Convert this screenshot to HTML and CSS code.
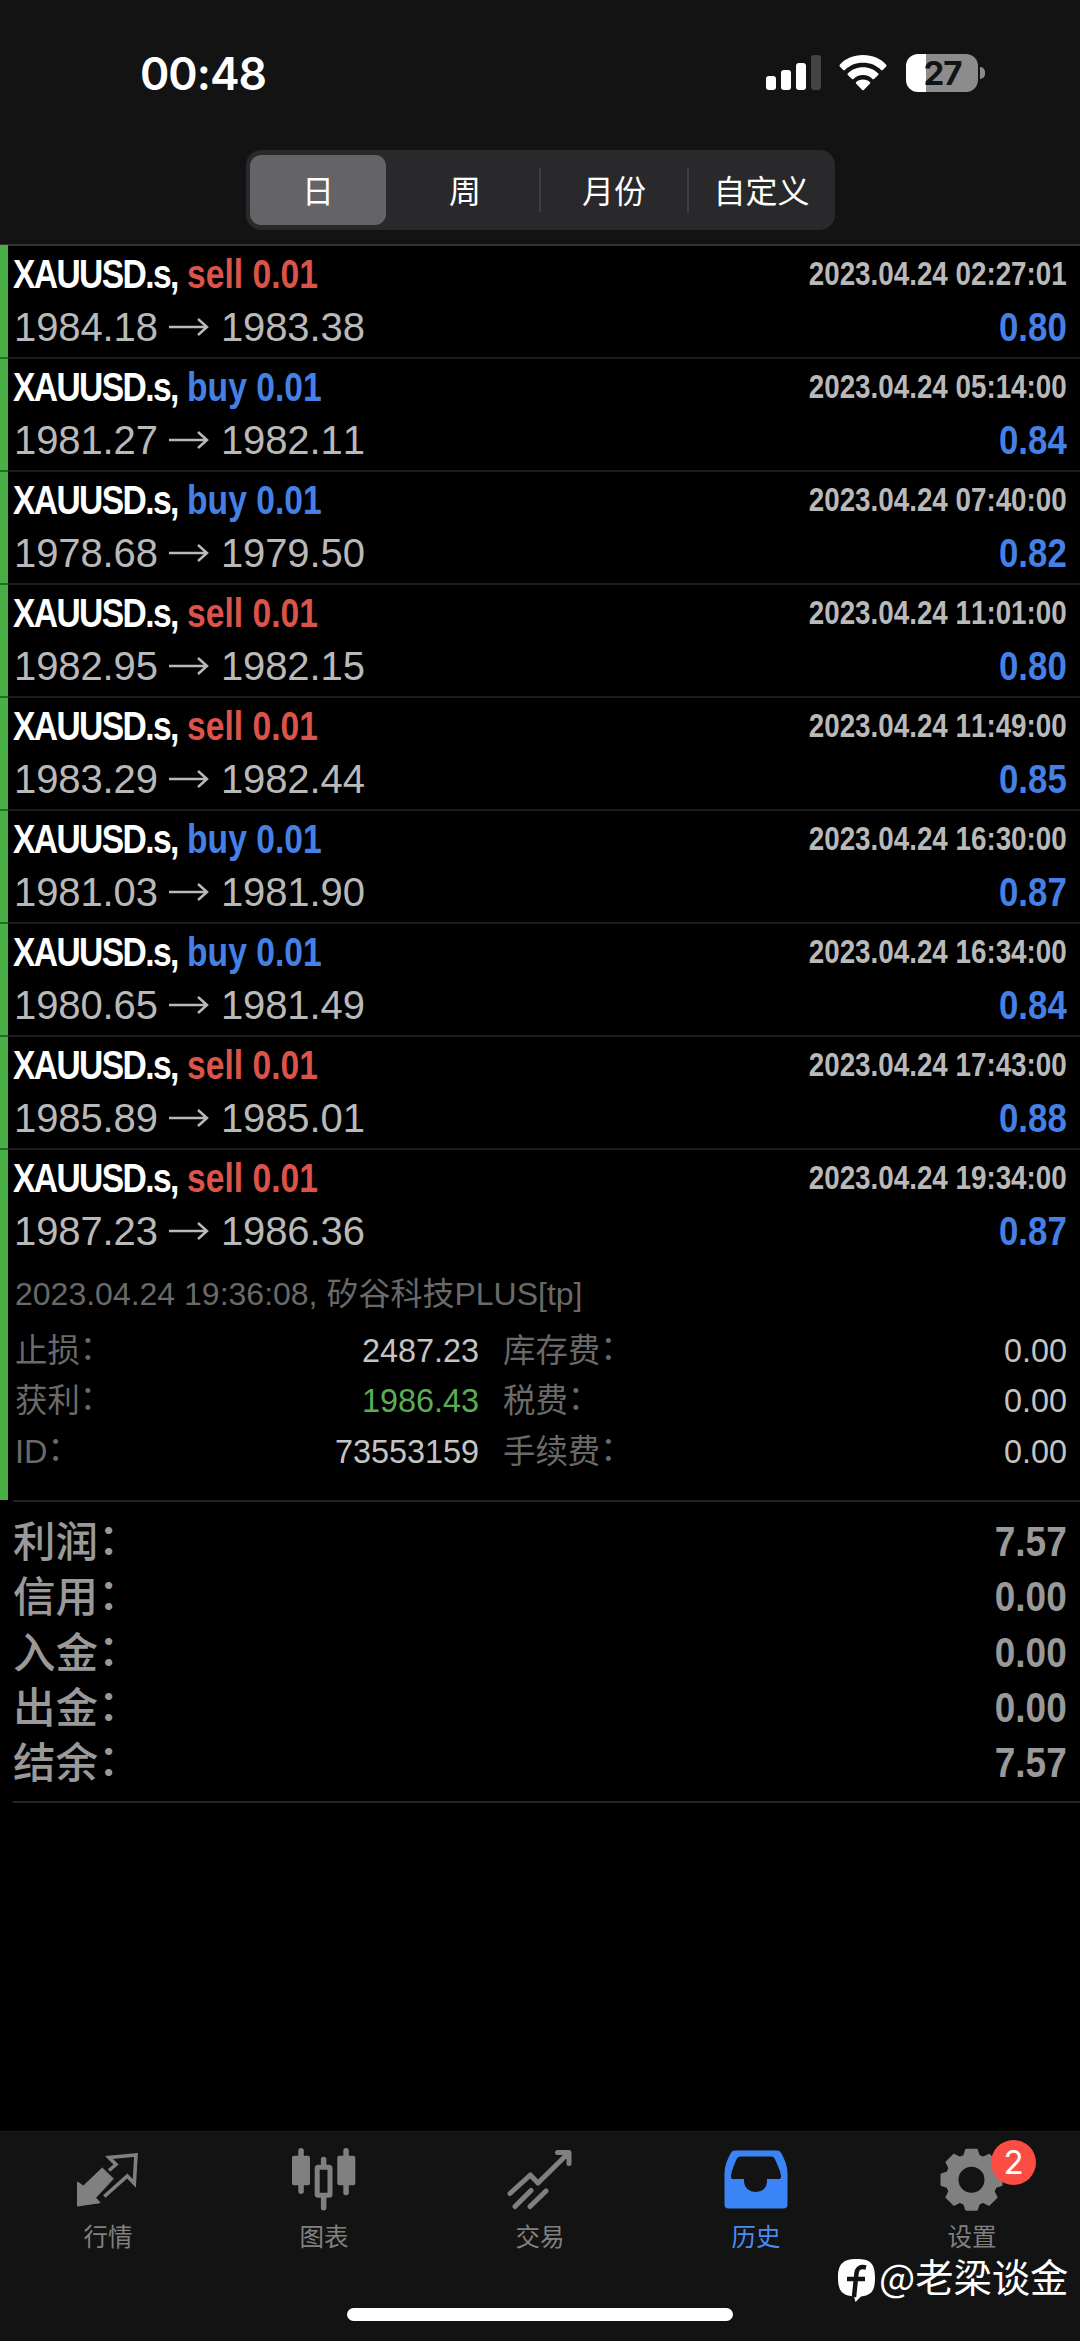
FILE: index.html
```html
<!DOCTYPE html>
<html lang="zh-CN">
<head>
<meta charset="utf-8">
<title>历史</title>
<link rel="stylesheet" href="styles.css">
</head>
<body>
<div class="app">
  <header class="header">
    <div class="status">
      <span class="clock">00:48</span>
      <div class="status-icons">
        <svg class="signal" width="56" height="36" viewBox="0 0 56 36">
          <rect x="0" y="21" width="10" height="14" rx="3" fill="#fff"/>
          <rect x="15" y="15" width="10" height="20" rx="3" fill="#fff"/>
          <rect x="30" y="8" width="10" height="27" rx="3" fill="#fff"/>
          <rect x="45" y="0" width="10" height="35" rx="3" fill="#444"/>
        </svg>
        <svg class="wifi" width="48" height="36" viewBox="0 0 48 36" fill="#fff">
          <path d="M24 0C33.500 0 41.700 3.600 47.200 9.700Q48 10.700 47.200 11.600L43.800 15Q43 15.700 42.100 14.900C37.500 10.300 31.400 7.700 24 7.700S10.500 10.300 5.900 14.900Q5 15.700 4.200 15L.8 11.600Q0 10.700.8 9.700C6.300 3.600 14.500 0 24 0Z"/>
          <path d="M24 12.200C30.300 12.200 35.500 14.600 39.300 18.500Q39.900 19.200 39.200 20L35 24Q34.300 24.600 33.500 23.900C31 21.300 28 20 24 20S17 21.300 14.500 23.900Q13.700 24.600 13 24L8.800 20Q8.100 19.200 8.700 18.500C12.500 14.600 17.700 12.200 24 12.200Z"/>
          <path d="M24 24.600C26.900 24.600 29.300 25.600 31 27.300Q31.500 27.900 31 28.500L24.800 35Q24 35.700 23.200 35L17 28.500Q16.500 27.900 17 27.300C18.700 25.600 21.100 24.600 24 24.600Z"/>
        </svg>
        <div class="battery"><span class="battery-level">27</span><span class="battery-cap"></span></div>
      </div>
    </div>
    <nav class="segments">
      <span class="segment active">日</span>
      <span class="segment week">周</span>
      <span class="segment ruled">月份</span>
      <span class="segment ruled">自定义</span>
    </nav>
  </header>

  <main class="deals" id="deals"></main>

  <section class="summary">
    <div class="sum-row"><span>利润<i class="colon">：</i></span><b>7.57</b></div>
    <div class="sum-row"><span>信用<i class="colon">：</i></span><b>0.00</b></div>
    <div class="sum-row"><span>入金<i class="colon">：</i></span><b>0.00</b></div>
    <div class="sum-row"><span>出金<i class="colon">：</i></span><b>0.00</b></div>
    <div class="sum-row"><span>结余<i class="colon">：</i></span><b>7.57</b></div>
  </section>

  <footer class="tabbar">
    <div class="tabs">
      <div class="tab">
        <svg width="80" height="80" viewBox="0 0 80 80">
          <path d="M34.300 17L45.300 27.700L27.700 46.700L32 51.700L9.500 55V31L15.300 35Z" fill="#808080" stroke="#808080" stroke-width="1" stroke-linejoin="round"/>
          <path d="M36.300 45.500L59.300 25L66.300 32.500L68 4L41 6.500L48 13.500L41 19.500" fill="none" stroke="#808080" stroke-width="3.600"/>
        </svg>
        <span>行情</span>
      </div>
      <div class="tab">
        <svg width="80" height="80" viewBox="0 0 80 80" fill="#808080">
          <rect x="14.300" y="-3" width="5.500" height="46" rx="2.700"/><rect x="8" y="4.700" width="18" height="29.600" rx="2"/>
          <rect x="59.300" y="-3" width="5.500" height="47.300" rx="2.700"/><rect x="53.300" y="4.700" width="18" height="29.600" rx="2"/>
          <rect x="36.900" y="5.700" width="5.500" height="12" rx="2.700"/><rect x="36.900" y="44" width="5.500" height="15.500" rx="2.700"/>
          <rect x="33.200" y="16.300" width="12.800" height="28" rx="1" fill="none" stroke="#808080" stroke-width="5"/>
        </svg>
        <span>图表</span>
      </div>
      <div class="tab">
        <svg width="80" height="80" viewBox="0 0 80 80" fill="none" stroke="#808080" stroke-width="5" stroke-linecap="round" stroke-linejoin="round">
          <path d="M10 42.500L30.300 24L38 32L67.500 3M57.500 1.500H69V12.500M15 55.500L31 39.500M30 55.500L46 40"/>
        </svg>
        <span>交易</span>
      </div>
      <div class="tab current">
        <svg width="80" height="80" viewBox="0 0 80 80">
          <path transform="translate(0 -1.400)" fill-rule="evenodd" fill="#3a84f7" d="M19 1H61Q64 1 65.500 4C69 10.500 71.500 17 71.500 24V55Q71.500 59 67.500 59H12.500Q8.500 59 8.500 55V24C8.500 17 11 10.500 14.500 4Q16 1 19 1ZM24 7Q22 7 21 9C18.500 14 16 20 15 26Q14.800 29.500 17 29.500H28V32.500Q29 42 40 42.500Q50 42 51 32.500V29.500H62.500Q65.500 29.500 65 26C64 20 61 14 58.500 9Q57.500 7 55.500 7Z"/>
        </svg>
        <span>历史</span>
      </div>
      <div class="tab">
        <svg width="80" height="80" viewBox="0 0 80 80">
          <path id="gear" fill-rule="evenodd" fill="#808080" stroke="#808080" stroke-width="2" stroke-linejoin="round"/>
        </svg>
        <span>设置</span>
        <i class="badge">2</i>
      </div>
    </div>
    <div class="home-bar"></div>
    <div class="watermark">
      <svg width="38" height="44" viewBox="0 0 38 44">
        <path fill="#fff" d="M18.500 0C32 0 37 4 37 18.500S33 36 23 37.500L17.500 43L16 37.500C4 36.500 0 32 0 18.500S5 0 18.500 0Z"/>
        <path d="M28 8.500Q19.500 6.500 18.500 14L16 38M9 20H27" fill="none" stroke="#131313" stroke-width="4.500"/>
      </svg>
      <span>@老梁谈金</span>
    </div>
  </footer>
</div>
<script src="app.js"></script>
</body>
</html>
```
FILE: styles.css
```css
* { box-sizing: border-box; }
body {
  margin: 0;
  background: #000;
  color: #b9b9b9;
  font-family: "Liberation Sans", "Noto Sans CJK SC", sans-serif;
}
.app {
  width: 1080px;
  height: 2341px;
  display: flex;
  flex-direction: column;
  overflow: hidden;
}
svg { display: block; flex: none; overflow: visible; }

/* header */
.header {
  height: 246px;
  margin-bottom: -1px;
  background: #131313;
  border-bottom: 2px solid #333;
}
.status {
  height: 150px;
  padding: 2px 102px 6px 140px;
  display: flex;
  align-items: center;
  justify-content: space-between;
}
.clock {
  padding-top: 2px;
  color: #fff;
  font: 600 44.500px/50px Inter, sans-serif;
  letter-spacing: -1px;
}
.status-icons { display: flex; align-items: center; }
.wifi { margin-left: 17px; }
.battery {
  position: relative;
  width: 72px;
  height: 38px;
  margin-left: 19px;
  border-radius: 12px;
  background: linear-gradient(90deg, #fff 20px, #8c8c8c 20px);
}
.battery-level {
  display: block;
  padding-left: 1px;
  text-align: center;
  color: #131313;
  font: 700 33px/38px Inter, sans-serif;
  letter-spacing: -1px;
}
.battery-cap {
  position: absolute;
  left: 74px;
  top: 13px;
  width: 5px;
  height: 12px;
  border-radius: 0 6px 6px 0;
  background: #8c8c8c;
}
.segments {
  width: 589px;
  height: 80px;
  margin-left: 246px;
  padding: 5px 0 5px 4px;
  display: grid;
  grid-template-columns: 136px 154px 148px 147px;
  border-radius: 15px;
  background: #29292b;
}
.segment {
  position: relative;
  display: flex;
  align-items: center;
  justify-content: center;
  padding-bottom: 3px;
  color: #fff;
  font-size: 32px;
}
.week { padding-left: 4px; }
.active { border-radius: 11px; background: #646368; }
.ruled::before {
  content: "";
  position: absolute;
  left: -1px;
  top: 13px;
  width: 2px;
  height: 44px;
  background: #3f3f42;
}

/* closed deals */
.deal {
  height: 113px;
  padding: 9px 13px 0 5px;
  border-left: 8px solid #49ae44;
  position: relative;
}
.deal + .deal::before {
  content: "";
  position: absolute;
  left: -8px;
  right: 0;
  top: -1px;
  height: 2px;
  background: linear-gradient(90deg, #2a6a28 8px, #1c1c1c 8px);
}
.deal.expanded { height: 351px; }
.line {
  display: flex;
  justify-content: space-between;
  white-space: nowrap;
  font-kerning: none;
}
.title, .date { height: 40px; line-height: 40px; font-weight: 700; }
.title { font-size: 41.500px; transform: scaleX(.81); transform-origin: 0 0; }
.symbol { color: #fff; letter-spacing: -2px; }
.sell { color: #db5349; }
.buy { color: #4580e6; }
.date { margin-top: -1px; font-size: 34px; transform: scaleX(.817); transform-origin: 100% 0; }
.prices, .profit { height: 54px; margin-top: 6px; line-height: 54px; }
.prices {
  display: flex;
  align-items: center;
  padding-left: 1px;
  font-size: 40px;
  letter-spacing: -.1px;
}
.prices svg { margin: 0 12px 0 11px; }
.profit {
  color: #4580e6;
  font-size: 41px;
  font-weight: 700;
  transform: scaleX(.85);
  transform-origin: 100% 0;
}
.comment {
  margin: 11px 0 0 2px;
  height: 50px;
  line-height: 50px;
  font-size: 32px;
  color: #6a6a6a;
}
.facts {
  margin: 7px 0 0 2px;
  display: grid;
  grid-template-columns: 140px 324px 24px 200px 1fr;
  grid-auto-rows: 50.300px;
  line-height: 50px;
  font-size: 32.400px;
  color: #6a6a6a;
}
.colon { display: inline-block; font-style: normal; transform: translate(0, -.08em); }
.value { text-align: right; color: #c4c4c4; }
.value.take { color: #5bad55; }

/* totals */
.summary {
  margin-left: 13px;
  padding: 12px 13px 0 0;
  height: 303px;
  border-top: 2px solid #222;
  border-bottom: 2px solid #222;
  color: #999;
}
.sum-row {
  height: 55.300px;
  display: flex;
  justify-content: space-between;
  font-size: 42.500px;
  line-height: 55px;
}
.sum-row span { margin-top: -3px; font-family: "Noto Sans CJK SC", sans-serif; font-weight: 500; }
.sum-row b { transform: scaleX(.87); transform-origin: 100% 0; }

/* bottom navigation */
.tabbar {
  position: relative;
  height: 210px;
  margin-top: auto;
  background: #131313;
  border-top: 1px solid #1e1e1e;
}
.tabs { display: grid; grid-template-columns: repeat(5, 216px); }
.tab {
  position: relative;
  display: flex;
  flex-direction: column;
  align-items: center;
  padding-top: 19px;
  color: #808080;
  font-size: 24.500px;
  line-height: 30px;
}
.tab span { margin-top: -8px; }
.current { color: #4a8af5; }
.badge {
  position: absolute;
  left: 127px;
  top: 8px;
  width: 45px;
  height: 45px;
  border-radius: 50%;
  background: #fc4d44;
  color: #fff;
  font: 400 33px/45px Inter, sans-serif;
  text-align: center;
}
.home-bar {
  position: absolute;
  left: 347px;
  top: 176px;
  width: 386px;
  height: 13px;
  border-radius: 7px;
  background: #fff;
}
.watermark {
  position: absolute;
  left: 838px;
  top: 116px;
  display: flex;
  align-items: center;
  gap: 3px;
  color: #fff;
  font: 38.300px/56px "Noto Sans CJK SC", sans-serif;
  white-space: nowrap;
}
.watermark svg { margin-top: 10px; }
```
FILE: app.js
```js
const deals = [
  ["sell", "1984.18", "1983.38", "02:27:01", "0.80"],
  ["buy", "1981.27", "1982.11", "05:14:00", "0.84"],
  ["buy", "1978.68", "1979.50", "07:40:00", "0.82"],
  ["sell", "1982.95", "1982.15", "11:01:00", "0.80"],
  ["sell", "1983.29", "1982.44", "11:49:00", "0.85"],
  ["buy", "1981.03", "1981.90", "16:30:00", "0.87"],
  ["buy", "1980.65", "1981.49", "16:34:00", "0.84"],
  ["sell", "1985.89", "1985.01", "17:43:00", "0.88"],
  ["sell", "1987.23", "1986.36", "19:34:00", "0.87"]
];
const arrow = '<svg width="40" height="18" viewBox="0 0 40 18" fill="none" stroke="#b9b9b9" stroke-width="2.5"><path d="M0 9H38M29 1L38 9L29 17"/></svg>';
const colon = '<i class="colon">：</i>';
const details = `
  <div class="comment">2023.04.24 19:36:08, 矽谷科技PLUS[tp]</div>
  <div class="facts">
    <span>止损${colon}</span><span class="value">2487.23</span><i></i><span>库存费${colon}</span><span class="value">0.00</span>
    <span>获利${colon}</span><span class="value take">1986.43</span><i></i><span>税费${colon}</span><span class="value">0.00</span>
    <span>ID${colon}</span><span class="value">73553159</span><i></i><span>手续费${colon}</span><span class="value">0.00</span>
  </div>`;
document.getElementById("deals").innerHTML = deals.map(([side, open, close, time, profit], i) => {
  const last = i === deals.length - 1;
  return `<article class="deal${last ? " expanded" : ""}">
    <div class="line"><div class="title"><span class="symbol">XAUUSD.s,</span> <span class="${side}">${side} 0.01</span></div><div class="date">2023.04.24 ${time}</div></div>
    <div class="line"><div class="prices">${open}${arrow}${close}</div><div class="profit">${profit}</div></div>
    ${last ? details : ""}
  </article>`;
}).join("");

// Eight-tooth gear around (39.5, 28.8)
const points = [];
for (let t = 0; t < 8; t++) {
  [[-17, 25], [-10, 30.5], [10, 30.5], [17, 25]].forEach(([deg, r]) => {
    const a = (t * 45 + deg) * Math.PI / 180;
    points.push((39.5 + r * Math.sin(a)).toFixed(1) + " " + (28.8 - r * Math.cos(a)).toFixed(1));
  });
}
document.getElementById("gear").setAttribute("d", "M" + points.join("L") + "ZM53.5 28.800A14 14 0 1 0 25.500 28.800A14 14 0 1 0 53.500 28.800Z");
```
